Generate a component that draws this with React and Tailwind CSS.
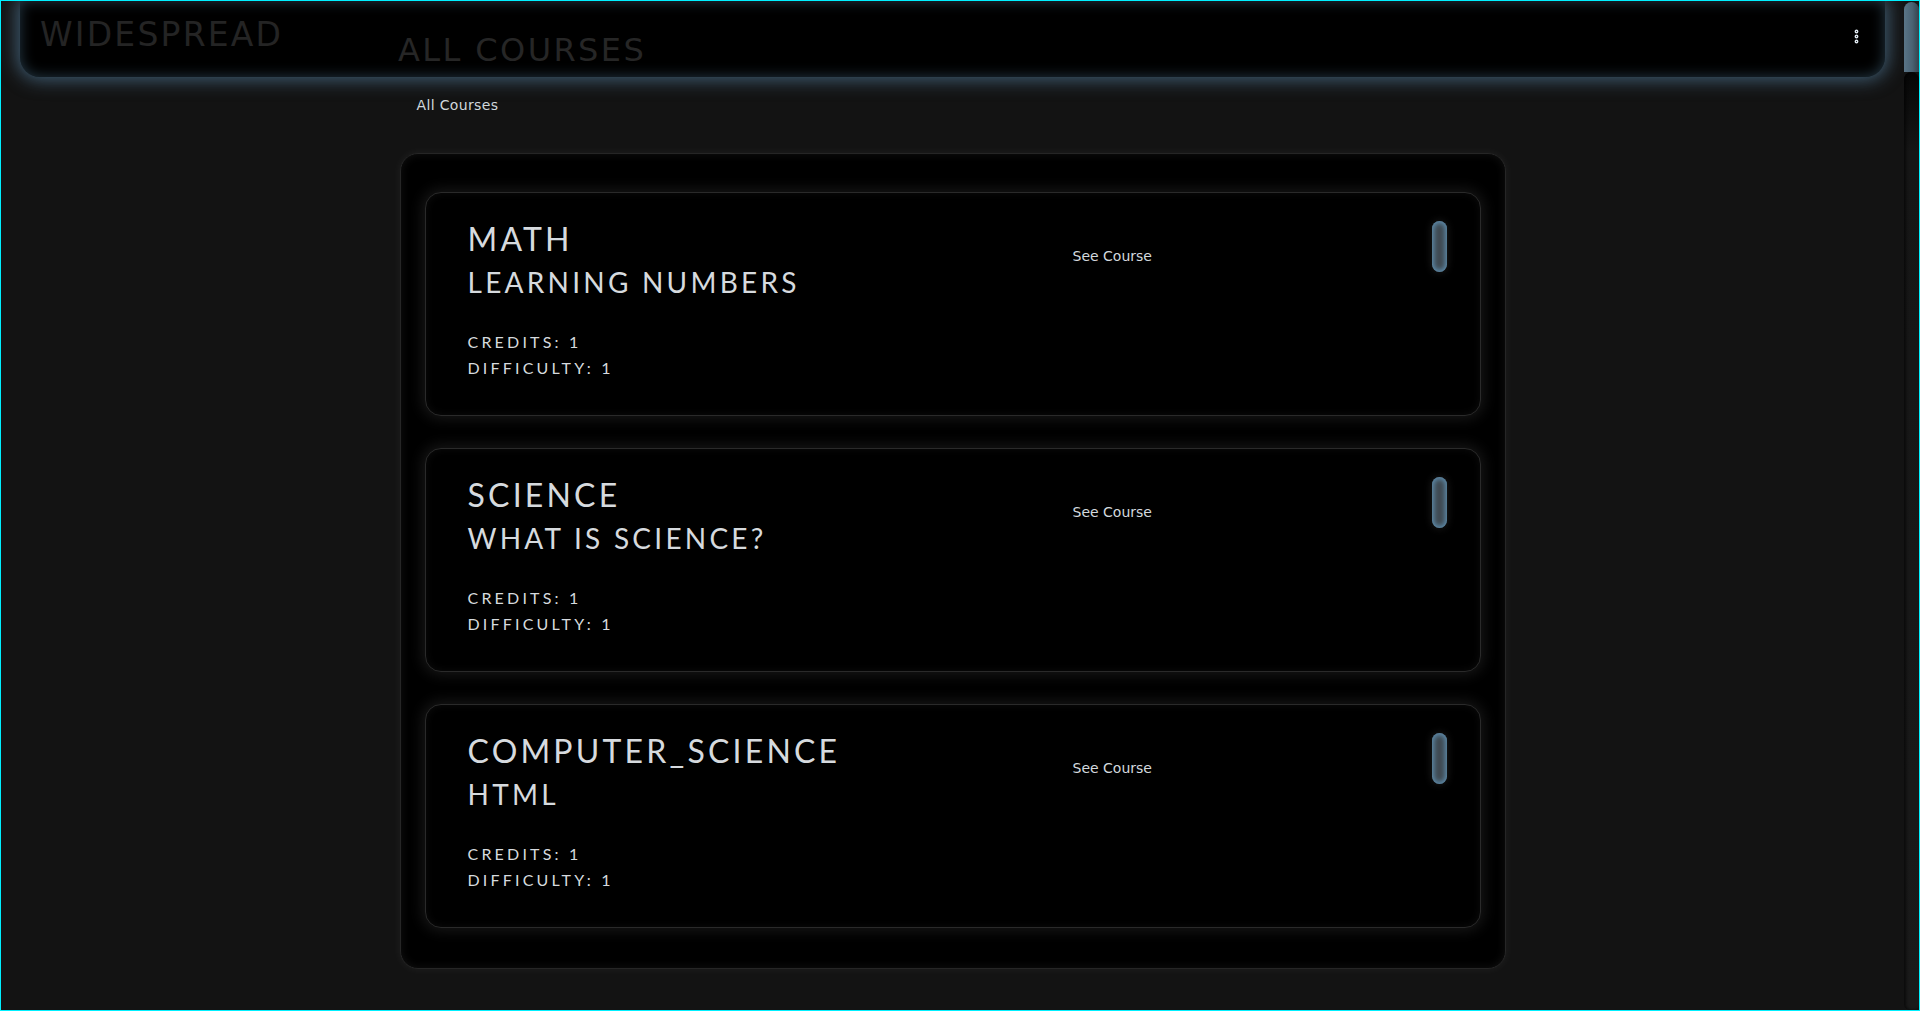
import React from "react";
import { EllipsisVertical } from "lucide-react";

const COURSES = [
  { subject: "MATH", title: "LEARNING NUMBERS", credits: 1, difficulty: 1 },
  { subject: "SCIENCE", title: "WHAT IS SCIENCE?", credits: 1, difficulty: 1 },
  { subject: "COMPUTER_SCIENCE", title: "HTML", credits: 1, difficulty: 1 },
];

const CourseCard = ({ c }) => (
  <div className="h-[224px] rounded-[16px] border border-[#2a2a2a] bg-black flex items-start pl-[42px] pt-[26px] shadow-[0_0_14px_3px_rgba(255,255,255,0.09),inset_0_0_8px_rgba(255,255,255,0.05)]">
    <div className="w-[605px] font-['Lato',sans-serif] text-[#d6dade]">
      <h2 className="text-[32px] leading-[40px] tracking-[0.1em]">{c.subject}</h2>
      <h3 className="text-[28px] leading-[36px] tracking-[0.116em] mt-[5px]">{c.title}</h3>
      <p className="text-[16px] leading-[26px] tracking-[0.2em] mt-[29px]">CREDITS: {c.credits}</p>
      <p className="text-[16px] leading-[26px] tracking-[0.2em]">DIFFICULTY: {c.difficulty}</p>
    </div>
    <a className="mt-[27px] font-['DejaVu_Sans',sans-serif] text-[14px] leading-[20px] text-[#d3d9de] cursor-pointer">
      See Course
    </a>
    <div className="ml-auto mr-[33px] mt-[2px] w-[15px] h-[51px] rounded-full bg-[#3f4a52] shadow-[inset_0_0_5px_2px_#5e8cac,0_0_8px_rgba(255,255,255,0.12)]" />
  </div>
);

const App = () => {
  return (
    <div className="w-[1920px] h-[1011px] border border-[#00f0ff] bg-[#131313] flex overflow-hidden">
      <div className="flex-1 min-w-0 flex flex-col">
        <header className="mx-[19px] h-[76px] shrink-0 rounded-b-[20px] bg-black flex items-start shadow-[0_0_18px_3px_rgba(70,105,130,0.85),inset_0_0_14px_rgba(70,105,130,0.55)]">
          <div className="w-[378px] pl-[20px] pt-[14px] font-['DejaVu_Sans',sans-serif] text-[33px] leading-[40px] tracking-[2.2px] text-[#242424]">
            WIDESPREAD
          </div>
          <h1 className="pt-[29px] font-['DejaVu_Sans',sans-serif] text-[32px] leading-[40px] tracking-[2.4px] text-[#262626]">
            ALL COURSES
          </h1>
          <EllipsisVertical size={17} strokeWidth={3.5} className="ml-auto mr-[20px] mt-[27px] text-[#dde6ee]" />
        </header>

        <main className="w-[1106px] mx-auto">
          <div className="mt-[18px] pl-[17px] font-['DejaVu_Sans',sans-serif] text-[14px] leading-[20px] tracking-[0.35px] text-[#d0d7dc]">
            All Courses
          </div>
          <section className="mt-[38px] rounded-[18px] border border-[#262626] bg-black px-[24px] pt-[38px] pb-[40px] flex flex-col gap-[32px] shadow-[0_0_10px_rgba(255,255,255,0.06),inset_0_0_10px_rgba(255,255,255,0.07)]">
            {COURSES.map((c, i) => (
              <CourseCard key={i} c={c} />
            ))}
          </section>
        </main>
      </div>

      <div className="w-[15px] shrink-0 flex flex-col pt-[1px]">
        <div className="h-[70px] rounded-t-full rounded-b-[6px] bg-[linear-gradient(90deg,#5a7587,#4a6273_55%,#34424c)]" />
        <div className="flex-1 rounded-t-[8px] rounded-b-[6px] bg-[linear-gradient(180deg,#060606,#161616_80px,#1a1a1a)] shadow-[inset_2px_0_3px_rgba(0,0,0,0.6)]" />
      </div>
    </div>
  );
};

export default App;
